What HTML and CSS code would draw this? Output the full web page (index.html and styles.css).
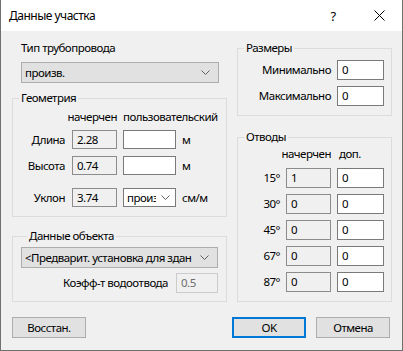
FILE: index.html
```html
<!DOCTYPE html>
<html lang="ru">
<head>
  <meta charset="UTF-8" />
  <title>Данные участка</title>
  <link rel="stylesheet" href="styles.css">
</head>
<body>
  <div class="window">
    <div class="titlebar">
      <span class="title">Данные участка</span>
      <span class="tbtn">?</span>
      <span class="tbtn">
        <svg width="11" height="11" viewBox="0 0 11 11"><path d="M0.5 0.5L10.5 10.5M10.5 0.5L0.5 10.5" stroke="#000" stroke-width="1" fill="none"/></svg>
      </span>
    </div>

    <div class="content">
      <div class="columns">
        <div class="left">
          <div class="pipe">
            <div class="lbl">Тип трубопровода</div>
            <div class="combo pipe-combo">
              <span>произв.</span>
              <svg width="9" height="5" viewBox="0 0 9 5"><path d="M0.5 0.5L4.5 4.5L8.5 0.5" stroke="#606060" fill="none"/></svg>
            </div>
          </div>

          <fieldset class="group geom">
            <legend>Геометрия</legend>
            <div class="geom-grid">
              <span></span><span class="hdr-end">начерчен</span><span class="hdr">пользовательский</span><span></span>
              <span class="rl">Длина</span><div class="box ro">2.28</div><div class="box"></div><span class="unit">м</span>
              <span class="rl">Высота</span><div class="box ro">0.74</div><div class="box"></div><span class="unit">м</span>
              <span class="rl">Уклон</span><div class="box ro">3.74</div>
              <div class="box small-combo"><span>произв.</span><svg width="9" height="5" viewBox="0 0 9 5"><path d="M0.5 0.5L4.5 4.5L8.5 0.5" stroke="#606060" fill="none"/></svg></div>
              <span class="unit">см/м</span>
            </div>
          </fieldset>

          <fieldset class="group obj">
            <legend>Данные объекта</legend>
            <div class="combo obj-combo">
              <span>&lt;Предварит. установка для здан</span>
              <svg width="9" height="5" viewBox="0 0 9 5"><path d="M0.5 0.5L4.5 4.5L8.5 0.5" stroke="#606060" fill="none"/></svg>
            </div>
            <div class="coef">
              <span>Коэфф-т водоотвода</span>
              <div class="box disabled">0.5</div>
            </div>
          </fieldset>
        </div>

        <div class="right">
          <fieldset class="group sizes">
            <legend>Размеры</legend>
            <div class="size-row"><span>Минимально</span><div class="box">0</div></div>
            <div class="size-row"><span>Максимально</span><div class="box">0</div></div>
          </fieldset>

          <fieldset class="group bends">
            <legend>Отводы</legend>
            <div class="bend-grid">
              <span></span><span class="hdr-end">начерчен</span><span class="hdr">доп.</span>
              <span class="rl">15°</span><div class="box ro">1</div><div class="box">0</div>
              <span class="rl">30°</span><div class="box ro">0</div><div class="box">0</div>
              <span class="rl">45°</span><div class="box ro">0</div><div class="box">0</div>
              <span class="rl">67°</span><div class="box ro">0</div><div class="box">0</div>
              <span class="rl">87°</span><div class="box ro">0</div><div class="box">0</div>
            </div>
          </fieldset>
        </div>
      </div>

      <div class="buttons">
        <button class="btn">Восстан.</button>
        <span class="spacer"></span>
        <button class="btn ok">OK</button>
        <button class="btn">Отмена</button>
      </div>
    </div>
  </div>
</body>
</html>
```

FILE: styles.css
```css
body {
  margin: 0;
  font-family: "Noto Sans", "Liberation Sans", sans-serif;
  font-size: 11.5px;
  letter-spacing: -0.5px;
  color: #000;
  background: #fff;
}
.window {
  width: 403px;
  height: 351px;
  box-sizing: border-box;
  border: 1px solid #707070;
  border-top: none;
  background: #f0f0f0;
  display: flex;
  flex-direction: column;
}
.titlebar {
  height: 31px;
  background: #fff;
  display: flex;
  align-items: center;
}
.title {
  flex: 1;
  padding-left: 8px;
  line-height: 16px;
  font-size: 12px;
}
.tbtn {
  width: 46px;
  height: 31px;
  display: flex;
  align-items: center;
  justify-content: center;
  font-size: 13px;
}
.content {
  padding: 0 10px 0 11px;
  flex: 1;
}
.columns {
  display: flex;
  gap: 10px;
}
.left {
  width: 215px;
}
.right {
  width: 155px;
}
.lbl, span, legend {
  line-height: 16px;
  white-space: nowrap;
}
.pipe {
  padding: 9px 0 0 9px;
}
.combo {
  box-sizing: border-box;
  height: 21px;
  background: #e1e1e1;
  border: 1px solid #adadad;
  display: flex;
  align-items: center;
  justify-content: space-between;
  padding: 0 8px 0 3px;
  overflow: hidden;
}
.pipe-combo {
  margin-top: 6px;
  width: 198px;
}
.group {
  margin: 0;
  padding: 0;
  border: 1px solid #dcdcdc;
  min-width: 0;
}
.group legend {
  margin-left: 6px;
  padding: 0 2px;
}
.box {
  box-sizing: border-box;
  height: 20px;
  border: 1px solid #7a7a7a;
  background: #fff;
  padding: 0 4px;
  line-height: 18px;
  overflow: hidden;
  white-space: nowrap;
}
.box.ro {
  background: #f0f0f0;
  border-color: #8c8c8c;
}
.box.disabled {
  background: #f0f0f0;
  border-color: #cccccc;
  color: #6d6d6d;
}
.rl {
  text-align: right;
}
.hdr-end {
  justify-self: end;
}
.geom {
  margin-top: 7px;
  padding: 3px 0 9px 0;
}
.geom-grid {
  display: grid;
  grid-template-columns: 53px 45px 53px auto;
  grid-template-rows: 16px 24px 26px 32px;
  column-gap: 6px;
  align-items: end;
}
.geom-grid .box {
  height: 19px;
  line-height: 17px;
}
.geom-grid .rl,
.geom-grid .unit {
  line-height: 19px;
}
.geom-grid .rl {
  padding-right: 1px;
}
.small-combo {
  display: flex;
  align-items: center;
  justify-content: space-between;
  padding: 0 5px 0 3px;
}
.small-combo span {
  overflow: hidden;
  width: 29px;
  line-height: 17px;
}
.obj {
  margin-top: 11px;
  padding: 3px 8px 8px 8px;
}
.obj-combo {
  width: 197px;
}
.coef {
  display: flex;
  justify-content: flex-end;
  align-items: center;
  gap: 8px;
  margin-top: 5px;
}
.coef .box {
  width: 42px;
}
.sizes {
  margin-top: 9px;
  padding: 4px 7px 9px 0;
}
.size-row {
  display: flex;
  justify-content: flex-end;
  align-items: center;
  gap: 6px;
}
.size-row + .size-row {
  margin-top: 6px;
}
.size-row .box {
  width: 47px;
}
.bends {
  margin-top: 13px;
  padding: 1px 7px 9px 0;
}
.bend-grid {
  display: grid;
  grid-template-columns: 1fr 45px 47px;
  grid-template-rows: 16px repeat(5, 20px);
  column-gap: 6px;
  row-gap: 6px;
  align-items: center;
}
.bend-grid .hdr {
  padding-left: 2px;
}
.buttons {
  display: flex;
  gap: 10px;
  margin-top: 15px;
  padding-right: 2px;
}
.spacer {
  flex: 1;
}
.btn {
  box-sizing: border-box;
  width: 74px;
  height: 21px;
  background: #e1e1e1;
  border: 1px solid #adadad;
  font-family: inherit;
  font-size: 11.5px;
  letter-spacing: -0.5px;
  padding: 0;
  color: #000;
}
.btn.ok {
  border: 2px solid #0078d7;
}
```
